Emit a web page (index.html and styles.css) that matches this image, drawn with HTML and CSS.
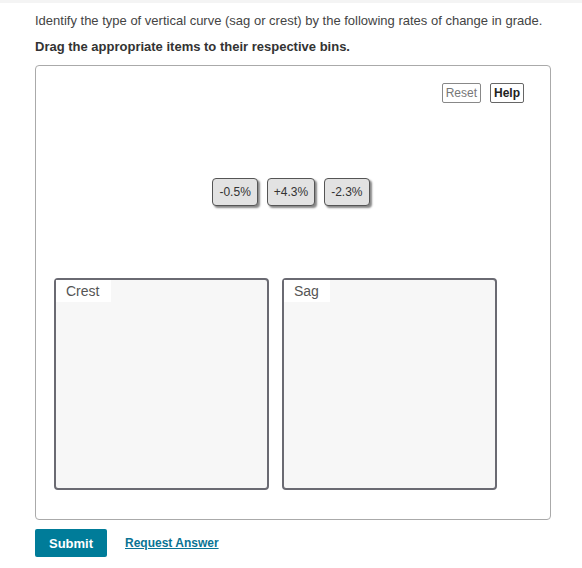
FILE: index.html
```html
<!DOCTYPE html>
<html>
<head>
<meta charset="utf-8">
<link rel="stylesheet" href="styles.css">
</head>
<body>
<div class="topband"></div>
<div class="page">
  <p class="prompt">Identify the type of vertical curve (sag or crest) by the following rates of change in grade.</p>
  <p class="instr">Drag the appropriate items to their respective bins.</p>
  <div class="board">
    <div class="tools">
      <button class="tool reset">Reset</button>
      <button class="tool help">Help</button>
    </div>
    <div class="chips">
      <span class="chip">-0.5%</span>
      <span class="chip">+4.3%</span>
      <span class="chip">-2.3%</span>
    </div>
    <div class="bins">
      <div class="bin"><span class="bin-label">Crest</span></div>
      <div class="bin"><span class="bin-label">Sag</span></div>
    </div>
  </div>
  <div class="actions">
    <button class="submit">Submit</button>
    <a class="request" href="#">Request Answer</a>
  </div>
</div>
</body>
</html>
```
FILE: styles.css
```css
* { box-sizing: border-box; }
html, body { margin: 0; padding: 0; background: #fff; }
body { font-family: "Liberation Sans", Arial, sans-serif; color: #333; }
.topband { height: 3px; background: #f4f4f4; }
.page { padding: 0 31px 0 35px; }
.prompt { margin: 10px 0 0; font-size: 13px; line-height: 16px; color: #444; }
.instr { margin: 9px 0 0; font-size: 13px; line-height: 18px; font-weight: bold; color: #333; }
.board {
  margin-top: 9px;
  height: 455px;
  border: 1px solid #aaa;
  border-radius: 4px;
  padding: 17px 26px 0 18px;
}
.tools { display: flex; justify-content: flex-end; gap: 9px; }
.tool {
  font-family: "Liberation Sans", Arial, sans-serif;
  font-size: 12px;
  line-height: 16px;
  padding: 1px 3px;
  background: #fff;
  border: 1px solid #666;
  border-radius: 2px;
  height: 20px;
}
.reset { color: #777; border-color: #888; }
.help { color: #222; font-weight: bold; }
.chips { display: flex; justify-content: center; gap: 9px; margin-top: 75px; padding-left: 4px; }
.chip {
  display: inline-block;
  height: 28px;
  padding: 0 6px;
  font-size: 12px;
  line-height: 26px;
  color: #333;
  background: #e2e2e2;
  border: 1px solid #555;
  border-radius: 4px;
  box-shadow: 2px 2px 2px #888;
}
.bins { display: flex; gap: 13px; margin-top: 72px; }
.bin {
  width: 215px;
  height: 212px;
  border: 2px solid #6a6a72;
  border-radius: 4px;
  background: #f7f7f7;
}
.bin-label {
  display: inline-block;
  background: #fff;
  padding: 3px 10px 3px 10px;
  font-size: 14px;
  line-height: 16px;
  color: #555;
}
.bin:first-child .bin-label { width: 55px; }
.bin:last-child .bin-label { width: 46px; }
.actions { display: flex; align-items: center; gap: 18px; margin-top: 9px; }
.submit {
  font-family: "Liberation Sans", Arial, sans-serif;
  background: #007c99;
  color: #fff;
  font-weight: bold;
  font-size: 13px;
  border: none;
  border-radius: 2px;
  width: 72px;
  height: 28px;
}
.request { color: #0a7394; font-weight: bold; font-size: 12px; text-decoration: underline; }
```
